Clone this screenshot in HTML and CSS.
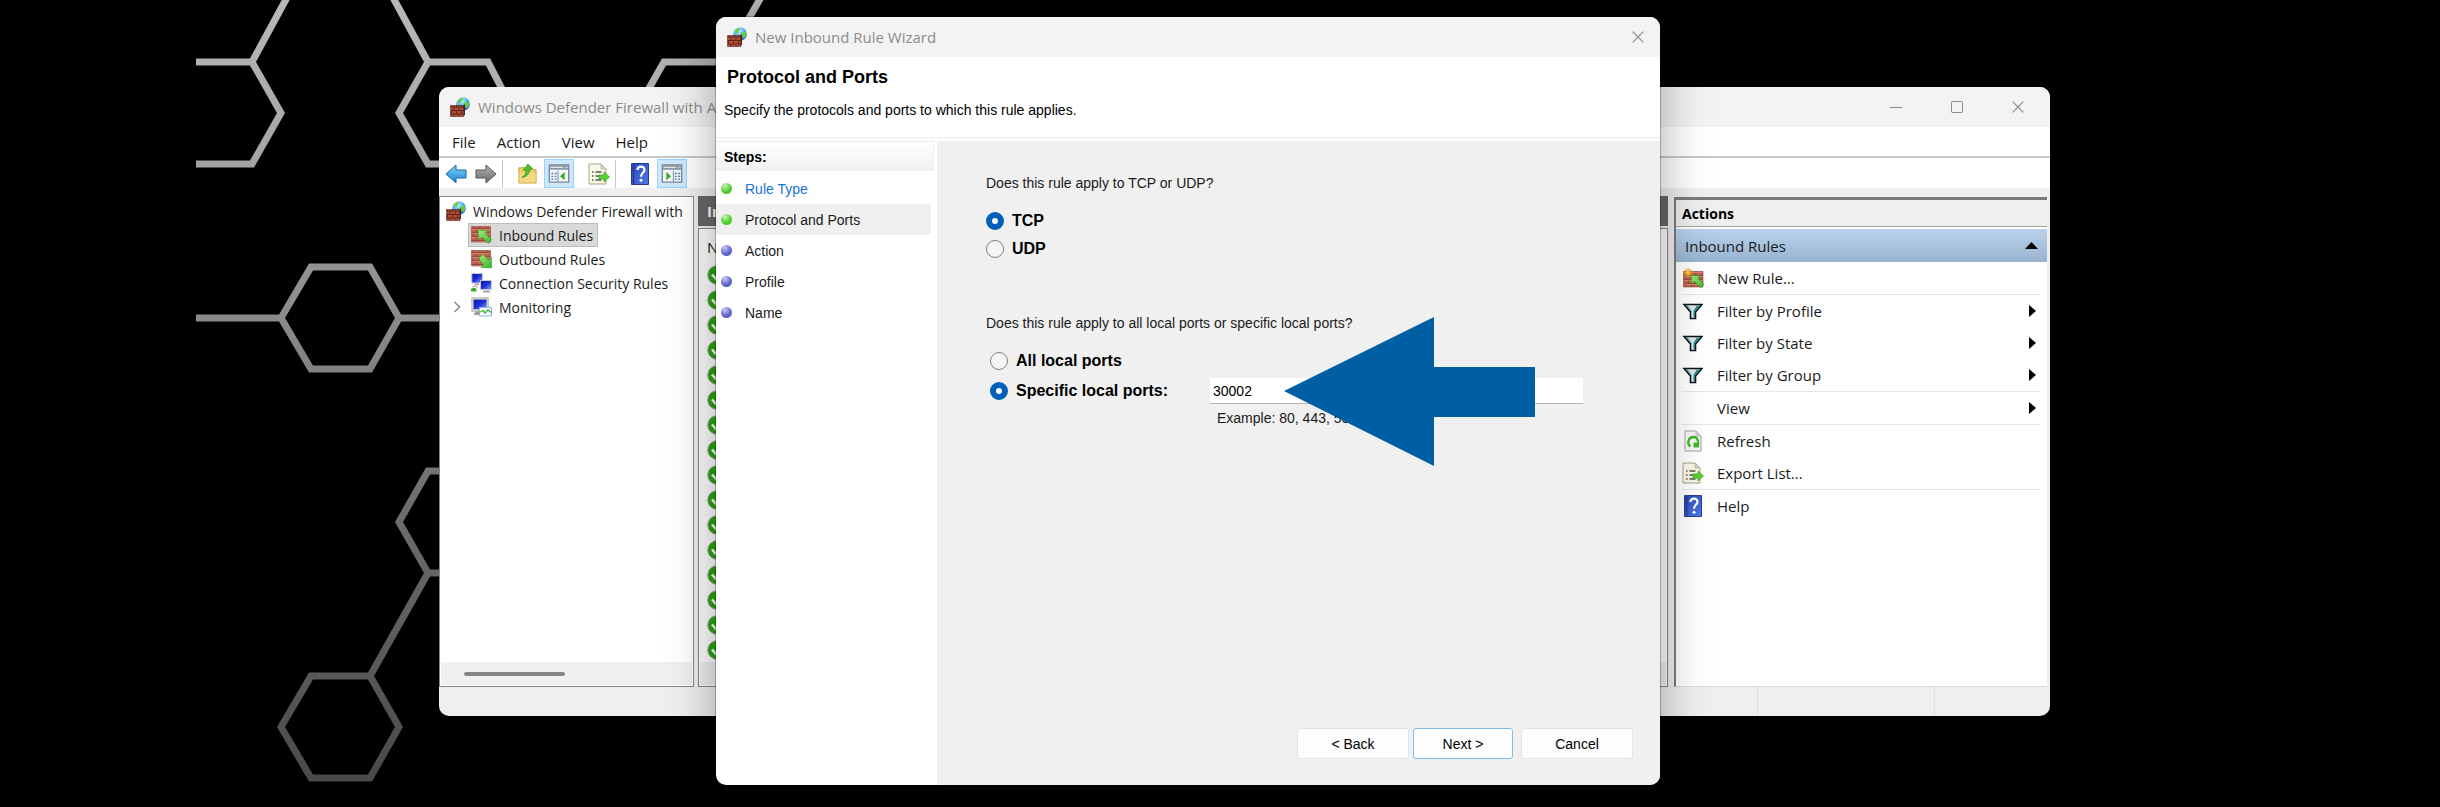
FILE: index.html
```
<!DOCTYPE html>
<html lang="en">
<head>
  <meta charset="UTF-8" />
  <meta name="viewport" content="width=device-width, initial-scale=1.0"/>
  <title>New Inbound Rule Wizard</title>
  <link rel="stylesheet" href="styles.css">
</head>
<body>
  <!-- shared icons -->
  <svg class="defs" aria-hidden="true">
    <defs>
      <linearGradient id="hexfade" gradientUnits="userSpaceOnUse" x1="0" y1="0" x2="0" y2="807">
        <stop offset="0" stop-color="#b8b8b8"/>
        <stop offset="0.2" stop-color="#a4a4a4"/>
        <stop offset="0.5" stop-color="#7c7c7c"/>
        <stop offset="1" stop-color="#464646"/>
      </linearGradient>
      <radialGradient id="globe" cx="0.4" cy="0.25" r="0.8">
        <stop offset="0" stop-color="#d8f2ff"/>
        <stop offset="0.55" stop-color="#3fa9ee"/>
        <stop offset="1" stop-color="#1550b4"/>
      </radialGradient>
      <linearGradient id="greenarrow" x1="0" y1="0" x2="1" y2="1">
        <stop offset="0" stop-color="#9cf07a"/>
        <stop offset="1" stop-color="#38b522"/>
      </linearGradient>
      <linearGradient id="bluearrow" x1="0" y1="0" x2="0" y2="1">
        <stop offset="0" stop-color="#7fd3f8"/>
        <stop offset="1" stop-color="#1c85d8"/>
      </linearGradient>
      <linearGradient id="grayarrow" x1="0" y1="0" x2="0" y2="1">
        <stop offset="0" stop-color="#b5b5b5"/>
        <stop offset="1" stop-color="#686868"/>
      </linearGradient>
      <linearGradient id="bluebook" x1="0" y1="0" x2="1" y2="1">
        <stop offset="0" stop-color="#2c48b4"/>
        <stop offset="1" stop-color="#4f7ae6"/>
      </linearGradient>
      <linearGradient id="screen" x1="0" y1="0" x2="1" y2="1">
        <stop offset="0" stop-color="#0a12a8"/>
        <stop offset="0.5" stop-color="#1c2fd8"/>
        <stop offset="1" stop-color="#8fa6ff"/>
      </linearGradient>
      <pattern id="bricks" width="5" height="7" patternUnits="userSpaceOnUse">
        <rect width="5" height="7" fill="#b0503a"/>
        <path d="M0 3h5M0 6.500h5M1.500 0v3M4 3v3.500" stroke="#5e2116" stroke-width="0.900"/>
      </pattern>
      <pattern id="bricks-light" width="7" height="8" patternUnits="userSpaceOnUse">
        <rect width="7" height="8" fill="#c2634a"/>
        <path d="M0 3.500h7M0 7.500h7M2 0v3.500M5.500 4v3.500" stroke="#8a4a3c" stroke-width="0.900"/>
        <path d="M0 .5h7M0 4.500h7" stroke="#dc9480" stroke-width="0.700"/>
      </pattern>
    </defs>

    <symbol id="i-firewall" viewBox="0 0 20 20">
      <circle cx="13" cy="7" r="6.800" fill="url(#globe)"/>
      <path d="M9 2.600c2-1.800 4-1.600 4.500-.6-.3 1.600-2 1.400-2.300 3-.2 1.400-1.800 1.600-3.200 1zM15 5.500c1.500-1.500 3-1.500 4 0 .6 2-.4 4.500-2 5.800-1.500-.8-1-2-1.800-3-.9-.9-.8-1.900-.2-2.800z" fill="#62d23a"/>
      <path d="M.5 8.500h13v11H.5z" fill="url(#bricks)" stroke="#5e2116" stroke-width=".6"/>
      <path d="M13.500 8.500l1.500-1.400v10.700l-1.500 1.700z" fill="#5d2012"/>
    </symbol>
    <symbol id="i-inbound" viewBox="0 0 21 20">
      <path d="M.5 1.500h19v15.500H.5z" fill="url(#bricks-light)" stroke="#8f4634" stroke-width=".6"/>
      <path d="M7 5l10 .6-2.800 2.400 6.500 6.500-3.500 4-6.400-6.600L8 15z" fill="url(#greenarrow)" stroke="#3d9a2a" stroke-width=".6"/>
    </symbol>
    <symbol id="i-outbound" viewBox="0 0 21 20">
      <path d="M.5 1.500h19v15.500H.5z" fill="url(#bricks-light)" stroke="#8f4634" stroke-width=".6"/>
      <path d="M8.500 8.500l3.500-3.200 5.500 5.600 3-2.600v10.600l-10.500-.5 2.700-2.700-4-4.600z" fill="url(#greenarrow)" stroke="#3d9a2a" stroke-width=".6"/>
    </symbol>
    <symbol id="i-newrule" viewBox="0 0 21 20">
      <path d="M.5 3.500h19.500v15.500H.5z" fill="url(#bricks-light)" stroke="#8f4634" stroke-width=".6"/>
      <path d="M5 0v9M.5 4.500h9M2 1.500l6 6M8 1.500l-6 6" stroke="#f5a21d" stroke-width="1.300"/>
      <circle cx="5" cy="4.500" r="2.200" fill="#ffc443"/>
      <path d="M8.500 7.500l9 .4-2.600 2.400 5.800 5.700-2.800 3.800-6.600-6.500-2.600 2.700z" fill="url(#greenarrow)" stroke="#3d9a2a" stroke-width=".6"/>
    </symbol>
    <symbol id="i-connection" viewBox="0 0 21 20">
      <path d="M.8.5h10.700v9.500H.8z" fill="url(#screen)" stroke="#c8c8d0"/>
      <path d="M9.500 7.500h11v9h-11z" fill="url(#screen)" stroke="#c8c8d0"/>
      <path d="M4 10.500h4v1.500H4zM12.500 17.500h5.500l1.500 2h-8z" fill="#a5a5a5"/>
      <path d="M0 17c0-3 5.500-3 5.500 0v1.500H0z" fill="#3ba92a"/>
      <path d="M2 14.500V13h4v2" fill="none" stroke="#aaa"/>
    </symbol>
    <symbol id="i-monitor" viewBox="0 0 21 20">
      <path d="M.8.8h16.500v13.500H.8z" fill="#d9d7cb" stroke="#aaa9a0" stroke-width=".8"/>
      <path d="M2.600 2.600h13v9.600h-13z" fill="url(#screen)"/>
      <path d="M3 16l4-2h5v4H3z" fill="#9d9d9d"/>
      <path d="M8.500 10.500h12v8.500h-12z" fill="#f6fbff" stroke="#8fb4dc"/>
      <path d="M9.500 15l2.500-1.500 2 2.500 3-3 3 2.500" fill="none" stroke="#3dae2c" stroke-width="1.300"/>
    </symbol>
    <symbol id="i-back" viewBox="0 0 22 20">
      <path d="M1 10L11 1v5h10v8H11v5z" fill="url(#bluearrow)" stroke="#1b67a8" stroke-linejoin="round"/>
    </symbol>
    <symbol id="i-forward" viewBox="0 0 22 20">
      <path d="M21 10L11 1v5H1v8h10v5z" fill="url(#grayarrow)" stroke="#555" stroke-linejoin="round"/>
    </symbol>
    <symbol id="i-folder" viewBox="0 0 20 22">
      <path d="M1 5h7l2 2h9v14H1z" fill="#f0cf6b" stroke="#c79c34"/>
      <path d="M1.500 10.500h17v10h-17z" fill="#f5d985"/>
      <path d="M4 15c3-1 4.500-4 4.500-7.500H5.500L10.500 1l5 5-3 .5C12 11.500 9 15 4 15z" fill="#4cc22e" stroke="#2f8c1d" stroke-width=".7"/>
    </symbol>
    <symbol id="i-pane-left" viewBox="0 0 22 20">
      <path d="M.8 1h20.400v18H.8z" fill="#f4f6f9" stroke="#7b8794" stroke-width="1.400"/>
      <path d="M1 1h20v5H1z" fill="#8b98a8"/>
      <path d="M2 3.500h13M17 3.500h1M19 3.500h1" stroke="#fff"/>
      <path d="M10 7v12" stroke="#8b98a8" stroke-width="1.200"/>
      <path d="M3 10h2M6.500 10h2M3 13h2M6.500 13h2M3 16h2M6.500 16h2" stroke="#3f78c4" stroke-width="1.400"/>
      <path d="M17 8.500v8.500l-5-4.200z" fill="#38ae20"/>
    </symbol>
    <symbol id="i-pane-right" viewBox="0 0 22 20">
      <path d="M.8 1h20.400v18H.8z" fill="#f4f6f9" stroke="#7b8794" stroke-width="1.400"/>
      <path d="M1 1h20v5H1z" fill="#8b98a8"/>
      <path d="M2 3.500h13M17 3.500h1M19 3.500h1" stroke="#fff"/>
      <path d="M12.500 7v12" stroke="#8b98a8" stroke-width="1.200"/>
      <path d="M14 10h2M17.500 10h2M14 13h2M17.500 13h2M14 16h2M17.500 16h2" stroke="#3f78c4" stroke-width="1.400"/>
      <path d="M5 8.500v8.500l5-4.200z" fill="#38ae20"/>
    </symbol>
    <symbol id="i-export" viewBox="0 0 22 22">
      <path d="M1 1h12l5 5v15H1z" fill="#fbf8e6" stroke="#a5a290"/>
      <path d="M13 1v5h5z" fill="#d6d4cb" stroke="#a5a290" stroke-width=".6"/>
      <path d="M4 9h1.500M7.500 9h6M4 13h1.500M7.500 13h4M4 17h1.500M7.500 17h6" stroke="#555" stroke-width="1.300"/>
      <path d="M11 12h5V9l5.500 5-5.500 5v-3h-5z" fill="#5bd234" stroke="#389d1e" stroke-width=".7"/>
    </symbol>
    <symbol id="i-help" viewBox="0 0 18 22">
      <path d="M.5.500h17v21H.5z" fill="url(#bluebook)" stroke="#2a3f94"/>
      <path d="M2.500 1v20" stroke="#22389a" stroke-width="1.500"/>
      <path d="M6.500 7c0-4.500 7-4.500 7-.3 0 3-3.500 3.300-3.500 7" fill="none" stroke="#fff" stroke-width="2.200"/>
      <circle cx="10" cy="17.200" r="1.500" fill="#fff"/>
    </symbol>
    <symbol id="i-filter" viewBox="0 0 20 17">
      <path d="M1 1.500h18l-6.500 7.500v6.500h-5V9z" fill="#e4e4e4" stroke="#111" stroke-width="1.600"/>
      <path d="M14 2.500h3L12 8.500v5.800h-1.500V8z" fill="#0f8f93"/>
      <path d="M3 2.500h1.500l4 5.500v1z" fill="#0f8f93"/>
    </symbol>
    <symbol id="i-refresh" viewBox="0 0 18 22">
      <path d="M1 1h11l5 5v15H1z" fill="#f8f8f8" stroke="#a0a0a0"/>
      <path d="M12 1v5h5z" fill="#ddd" stroke="#a0a0a0" stroke-width=".6"/>
      <path d="M6.500 16.500C2 13 5 7 9.500 7c4.500.3 5.500 4.500 3.800 7.500" fill="none" stroke="#3fb928" stroke-width="2.300"/>
      <path d="M9.500 12.500l6 .5-.5 4.500H9.500z" fill="#3fb928"/>
    </symbol>
    <symbol id="i-check" viewBox="0 0 20 20">
      <circle cx="10" cy="10" r="9.200" fill="#27a80c" stroke="#8f9a8c"/>
      <path d="M5 9.500l4 4.500 6-8" fill="none" stroke="#fff" stroke-width="2.600"/>
    </symbol>
    <symbol id="i-close" viewBox="0 0 12 12">
      <path d="M.7.7l10.600 10.600M11.300.7L.7 11.300" stroke="#8a8a8a" stroke-width="1.200"/>
    </symbol>
  </svg>

  <main class="desktop">
    <svg class="wallpaper" width="800" height="807" fill="none" stroke="url(#hexfade)" stroke-width="7" aria-hidden="true">
      <path d="M196 62h56L290-8M252 62l29 51-29 51h-56"/>
      <path d="M390-8l38 70h60l28 54M428 62l-29 51 29 51h40"/>
      <path d="M640 104l24-42h60l40-70"/>
      <path d="M196 318h85l30-51h59l29 51-29 51h-59l-30-51M399 318h60"/>
      <path d="M460 471h-32l-29 51 29 51h32M428 573l-58 103"/>
      <path d="M281 727l30-51h59l29 51-29 51h-59z"/>
    </svg>

    <section class="window console">
      <header class="titlebar">
        <svg class="app-icon"><use href="#i-firewall"/></svg>
        <span class="title">Windows Defender Firewall with A</span>
        <div class="controls">
          <button aria-label="Minimize"><svg width="12" height="12"><path d="M0 6.500h12" stroke="#8a8a8a"/></svg></button>
          <button aria-label="Maximize"><svg width="12" height="12"><rect x=".5" y=".5" width="11" height="11" rx="1" fill="none" stroke="#8a8a8a"/></svg></button>
          <button aria-label="Close"><svg width="12" height="12"><use href="#i-close"/></svg></button>
        </div>
      </header>

      <nav class="menubar">
        <button>File</button>
        <button>Action</button>
        <button>View</button>
        <button>Help</button>
      </nav>

      <div class="toolbar">
        <button aria-label="Back"><svg width="22" height="20"><use href="#i-back"/></svg></button>
        <button aria-label="Forward"><svg width="22" height="20"><use href="#i-forward"/></svg></button>
        <span class="divider"></span>
        <button aria-label="Up one level"><svg width="19" height="21"><use href="#i-folder"/></svg></button>
        <button class="pressed" aria-label="Show console tree"><svg width="22" height="19"><use href="#i-pane-left"/></svg></button>
        <button class="spaced" aria-label="Export list"><svg width="22" height="22"><use href="#i-export"/></svg></button>
        <span class="divider"></span>
        <button aria-label="Help"><svg width="18" height="22"><use href="#i-help"/></svg></button>
        <button class="pressed" aria-label="Show action pane"><svg width="22" height="19"><use href="#i-pane-right"/></svg></button>
      </div>

      <div class="panes">
        <aside class="tree">
          <ul>
            <li class="root"><svg class="app-icon"><use href="#i-firewall"/></svg><span>Windows Defender Firewall with</span></li>
            <li><span class="node selected"><svg><use href="#i-inbound"/></svg>Inbound Rules</span></li>
            <li><span class="node"><svg><use href="#i-outbound"/></svg>Outbound Rules</span></li>
            <li><span class="node"><svg><use href="#i-connection"/></svg>Connection Security Rules</span></li>
            <li><svg class="chevron" viewBox="0 0 8 12"><path d="M1.500 1l5 5-5 5" fill="none" stroke="#8a8a8a" stroke-width="1.500"/></svg><span class="node"><svg><use href="#i-monitor"/></svg>Monitoring</span></li>
          </ul>
          <div class="hscroll"><span></span></div>
        </aside>

        <section class="rules">
          <h2>In</h2>
          <div class="rules-list">
            <div class="column-head">N</div>
            <ul>
              <li><svg><use href="#i-check"/></svg></li>
              <li><svg><use href="#i-check"/></svg></li>
              <li><svg><use href="#i-check"/></svg></li>
              <li><svg><use href="#i-check"/></svg></li>
              <li><svg><use href="#i-check"/></svg></li>
              <li><svg><use href="#i-check"/></svg></li>
              <li><svg><use href="#i-check"/></svg></li>
              <li><svg><use href="#i-check"/></svg></li>
              <li><svg><use href="#i-check"/></svg></li>
              <li><svg><use href="#i-check"/></svg></li>
              <li><svg><use href="#i-check"/></svg></li>
              <li><svg><use href="#i-check"/></svg></li>
              <li><svg><use href="#i-check"/></svg></li>
              <li><svg><use href="#i-check"/></svg></li>
              <li><svg><use href="#i-check"/></svg></li>
              <li><svg><use href="#i-check"/></svg></li>
            </ul>
            <div class="hscroll"></div>
          </div>
        </section>

        <aside class="actions">
          <h2>Actions</h2>
          <h3>Inbound Rules <svg width="13" height="7"><path d="M0 7l6.500-7L13 7z"/></svg></h3>
          <div class="group">
            <button><span class="icon"><svg width="21" height="20"><use href="#i-newrule"/></svg></span>New Rule...</button>
          </div>
          <div class="group">
            <button class="more"><span class="icon"><svg width="20" height="17"><use href="#i-filter"/></svg></span>Filter by Profile</button>
            <button class="more"><span class="icon"><svg width="20" height="17"><use href="#i-filter"/></svg></span>Filter by State</button>
            <button class="more"><span class="icon"><svg width="20" height="17"><use href="#i-filter"/></svg></span>Filter by Group</button>
          </div>
          <div class="group">
            <button class="more"><span class="icon"></span>View</button>
          </div>
          <div class="group">
            <button><span class="icon"><svg width="18" height="22"><use href="#i-refresh"/></svg></span>Refresh</button>
            <button><span class="icon"><svg width="22" height="22"><use href="#i-export"/></svg></span>Export List...</button>
          </div>
          <div class="group">
            <button><span class="icon"><svg width="18" height="22"><use href="#i-help"/></svg></span>Help</button>
          </div>
        </aside>
      </div>

      <footer class="statusbar"><span></span><span></span></footer>
    </section>

    <section class="window wizard">
      <header class="titlebar">
        <svg class="app-icon"><use href="#i-firewall"/></svg>
        <span class="title">New Inbound Rule Wizard</span>
        <div class="controls">
          <button aria-label="Close"><svg width="12" height="12"><use href="#i-close"/></svg></button>
        </div>
      </header>

      <div class="intro">
        <h1>Protocol and Ports</h1>
        <p>Specify the protocols and ports to which this rule applies.</p>
      </div>

      <div class="wizard-body">
        <nav class="steps">
          <h2>Steps:</h2>
          <ul>
            <li class="done"><a href="#">Rule Type</a></li>
            <li class="done current">Protocol and Ports</li>
            <li>Action</li>
            <li>Profile</li>
            <li>Name</li>
          </ul>
        </nav>

        <form class="settings">
          <fieldset class="protocol">
            <legend>Does this rule apply to TCP or UDP?</legend>
            <label><input type="radio" name="protocol" checked>TCP</label>
            <label><input type="radio" name="protocol">UDP</label>
          </fieldset>

          <fieldset class="ports">
            <legend>Does this rule apply to all local ports or specific local ports?</legend>
            <label><input type="radio" name="ports">All local ports</label>
            <div class="port-row">
              <label for="specific"><input type="radio" id="specific" name="ports" checked>Specific local ports:</label>
              <input type="text" class="port-input" value="30002" aria-label="Specific local ports">
            </div>
            <p class="hint">Example: 80, 443, 5000-5010</p>
          </fieldset>

          <div class="buttons">
            <button type="button">&lt; Back</button>
            <button type="button" class="next">Next &gt;</button>
            <button type="button" class="cancel">Cancel</button>
          </div>
        </form>
      </div>

      <svg class="pointer" width="252" height="150" viewBox="0 0 252 150" aria-hidden="true">
        <path d="M0 74L150 0v50h101v50H150v49z" fill="#005fa3"/>
      </svg>
    </section>
  </main>
</body>
</html>
```
FILE: styles.css
```
* {
  box-sizing: border-box;
}

body {
  margin: 0;
  background-color: #000;
  color: #1a1a1a;
  font-family: "Open Sans", "Noto Sans", sans-serif;
  font-size: 15px;
}

h1, h2, h3, p, ul, fieldset {
  margin: 0;
  padding: 0;
}

ul {
  list-style: none;
}

button {
  border: none;
  padding: 0;
  background: none;
  color: inherit;
  font: inherit;
}

svg {
  display: block;
  flex: none;
}

.defs {
  position: absolute;
  width: 0;
  height: 0;
}

.desktop {
  position: relative;
  height: 100vh;
  overflow: hidden;
}

.wallpaper {
  position: absolute;
  left: 0;
  top: 0;
}

/* windows */
.window {
  position: absolute;
  display: flex;
  flex-direction: column;
  border-radius: 10px;
  overflow: hidden;
}

.console {
  left: 439px;
  right: 390px;
  top: 87px;
  bottom: 91px;
  background-color: #efefef;
}

.wizard {
  left: 716px;
  right: 780px;
  top: 17px;
  bottom: 22px;
  background-color: #fff;
  font-family: "Liberation Sans", Arial, sans-serif;
  font-size: 14px;
  box-shadow: 0 0 0 1px rgba(0, 0, 0, 0.25), 0 10px 50px rgba(0, 0, 0, 0.35);
}

.titlebar {
  display: flex;
  align-items: center;
  flex: none;
  height: 40px;
  padding-bottom: 1px;
  padding-left: 11px;
  background-color: #f3f3f3;
  color: #8c8c8c;
  font-family: "Open Sans", "Noto Sans", sans-serif;
  font-size: 15px;
}

.app-icon {
  width: 20px;
  height: 20px;
}

.title {
  flex: 1;
  margin-left: 8px;
  white-space: nowrap;
}

.controls {
  display: flex;
}

.controls button {
  display: flex;
  align-items: center;
  justify-content: center;
  width: 61px;
  height: 36px;
}

.console .controls {
  margin-right: 2px;
}

.wizard .controls button {
  width: 45px;
}

.menubar {
  display: flex;
  align-items: center;
  flex: none;
  gap: 21px;
  height: 31px;
  padding: 0 13px;
  background-color: #fff;
  border-bottom: 2px solid #c6c9cb;
}

.toolbar {
  display: flex;
  align-items: flex-end;
  flex: none;
  height: 30px;
  padding-left: 2px;
  background-color: #fff;
}

.toolbar button {
  display: flex;
  align-items: center;
  justify-content: center;
  width: 30px;
  height: 29px;
}

.toolbar .pressed {
  margin-left: 2px;
  background-color: #cce8ff;
  border: 1px solid #99d1ff;
}

.toolbar .spaced {
  margin-left: 10px;
}

.divider {
  width: 1px;
  height: 28px;
  margin: 0 9px 0 1px;
  background-color: #c8c8c8;
}

/* console panes */
.panes {
  display: grid;
  grid-template-columns: 255px 1fr 375px;
  gap: 4px;
  flex: 1;
  min-height: 0;
  padding: 8px 3px 0 0;
}

.tree {
  display: flex;
  flex-direction: column;
  justify-content: space-between;
  background-color: #fff;
  border: 1px solid #828790;
  padding: 2px 1px 1px;
  font-size: 14px;
}

.tree li {
  display: flex;
  align-items: center;
  height: 24px;
  padding-left: 27px;
  position: relative;
  white-space: nowrap;
}

.tree .root {
  gap: 7px;
  padding-left: 5px;
}

.node {
  display: flex;
  align-items: center;
  gap: 7px;
  height: 24px;
  padding: 0 5px 0 3px;
}

.node svg {
  width: 21px;
  height: 20px;
}

.selected {
  background-color: #d9d9d9;
  outline: 1px solid #bdbdbd;
  outline-offset: -1px;
}

.chevron {
  position: absolute;
  left: 12px;
  width: 8px;
  height: 12px;
}

.hscroll {
  display: flex;
  align-items: center;
  height: 23px;
  padding-left: 23px;
  background-color: #f0f0f0;
}

.hscroll span {
  width: 101px;
  height: 4px;
  border-radius: 2px;
  background-color: #858585;
}

.rules {
  display: flex;
  flex-direction: column;
  gap: 2px;
  min-width: 0;
}

.rules h2 {
  height: 30px;
  padding-left: 9px;
  background-color: #696969;
  color: #fff;
  font-size: 15px;
  line-height: 30px;
}

.rules-list {
  display: flex;
  flex-direction: column;
  flex: 1;
  border: 1px solid #828790;
  background-color: #fff;
  padding: 0 1px 1px;
}

.rules-list ul {
  flex: 1;
}

.column-head {
  height: 33px;
  padding-left: 7px;
  line-height: 36px;
}

.rules-list li {
  display: flex;
  align-items: center;
  height: 25px;
  padding-left: 7px;
}

.rules-list li svg {
  width: 20px;
  height: 20px;
}

.actions {
  margin: 1px 0 0 2px;
  border-top: 3px solid #7a7a7a;
  border-left: 2px solid #7a7a7a;
  border-bottom: 1px solid #dcdcdc;
  background-color: #fff;
}

.actions h2 {
  height: 27px;
  padding-left: 6px;
  background-color: #efefef;
  border-bottom: 1px solid #a5a5a5;
  color: #000;
  font-size: 14px;
  line-height: 28px;
}

.actions h3 {
  display: flex;
  align-items: center;
  justify-content: space-between;
  height: 33px;
  margin-top: 2px;
  padding: 0 9px;
  background: linear-gradient(#b9d1ea, #99b4d1);
  font-size: 15px;
  font-weight: 400;
}

.group {
  margin: 0 7px 0 6px;
  border-bottom: 1px solid #e8e8e8;
}

.group:last-child {
  border-bottom: none;
}

.group button {
  display: flex;
  align-items: center;
  width: 100%;
  height: 32px;
}

.group .icon {
  display: flex;
  justify-content: center;
  width: 22px;
  margin-right: 13px;
}

.more::after {
  content: "";
  margin-left: auto;
  margin-right: 4px;
  border: 6px solid transparent;
  border-left: 7px solid #000;
  border-right: none;
}

.statusbar {
  display: flex;
  justify-content: flex-end;
  flex: none;
  height: 31px;
  padding-top: 2px;
}

.statusbar span {
  width: 177px;
  border-left: 1px solid #dfdfdf;
}

.statusbar span:last-child {
  width: 116px;
}

/* wizard */
.intro {
  flex: none;
  height: 81px;
  padding: 9px 8px 0;
  border-bottom: 1px solid #ececec;
  color: #000;
}

.intro h1 {
  padding-left: 3px;
  font-size: 18px;
  line-height: 22px;
}

.intro p {
  margin-top: 13px;
  line-height: 18px;
}

.wizard-body {
  display: grid;
  grid-template-columns: 218px 1fr;
  column-gap: 3px;
  flex: 1;
  padding-top: 3px;
}

.steps h2 {
  height: 30px;
  padding-left: 8px;
  background: linear-gradient(#fff, #f0f0f0);
  border-top: 1px solid #ececec;
  border-right: 1px solid #ececec;
  color: #000;
  font-size: 14px;
  line-height: 30px;
}

.steps ul {
  padding-top: 2px;
}

.steps li {
  display: flex;
  align-items: center;
  gap: 13px;
  height: 31px;
  margin-right: 3px;
  padding-left: 5px;
}

.steps li::before {
  content: "";
  width: 11px;
  height: 11px;
  border-radius: 50%;
  background: radial-gradient(circle at 35% 25%, #c9c9f5 0, #6464cc 55%, #4f4fb8 100%);
}

.steps .done::before {
  background: radial-gradient(circle at 35% 25%, #c4f5b4 0, #55cc33 55%, #3eb41f 100%);
}

.steps .current {
  background-color: #f0f0f0;
}

.steps a {
  color: #1a73d9;
  text-decoration: none;
}

.settings {
  display: flex;
  flex-direction: column;
  padding: 33px 27px 26px 49px;
  background-color: #f0f0f0;
}

.settings fieldset {
  border: none;
  min-width: 0;
}

.settings legend {
  padding: 0;
  line-height: 18px;
}

.settings label {
  display: flex;
  align-items: center;
  gap: 8px;
  height: 28px;
  color: #000;
  font-size: 16px;
  font-weight: bold;
}

.settings input[type="radio"] {
  appearance: none;
  width: 18px;
  height: 18px;
  margin: 0;
  border: 1px solid #808080;
  border-radius: 50%;
  background-color: #f5f5f5;
}

.settings input[type="radio"]:checked {
  border: 6px solid #005fb8;
  background-color: #fff;
}

.protocol legend,
.ports legend {
  margin-bottom: 15px;
}

.ports {
  margin-top: 51px;
}

.ports > label,
.port-row {
  margin-left: 4px;
}

.port-row {
  display: flex;
  align-items: center;
  height: 31px;
}

.port-row label {
  width: 220px;
}

.port-input {
  flex: 1;
  height: 26px;
  margin-right: 50px;
  padding: 2px 3px 0;
  border: none;
  border-bottom: 1px solid #b5b5b5;
  background-color: #fff;
  color: #000;
  font: inherit;
}

.hint {
  margin-left: 231px;
  padding-top: 2px;
  line-height: 20px;
}

.buttons {
  display: flex;
  justify-content: flex-end;
  gap: 4px;
  margin-top: auto;
}

.buttons button {
  width: 112px;
  height: 31px;
  border: 1px solid #e3e3e3;
  border-radius: 3px;
  background-color: #fdfdfd;
  color: #000;
}

.buttons .next {
  width: 100px;
  border: 1px solid #85bce8;
}

.buttons .cancel {
  margin-left: 4px;
}

/* callout arrow over the port field */
.pointer {
  position: absolute;
  left: 568px;
  top: 300px;
}
```
